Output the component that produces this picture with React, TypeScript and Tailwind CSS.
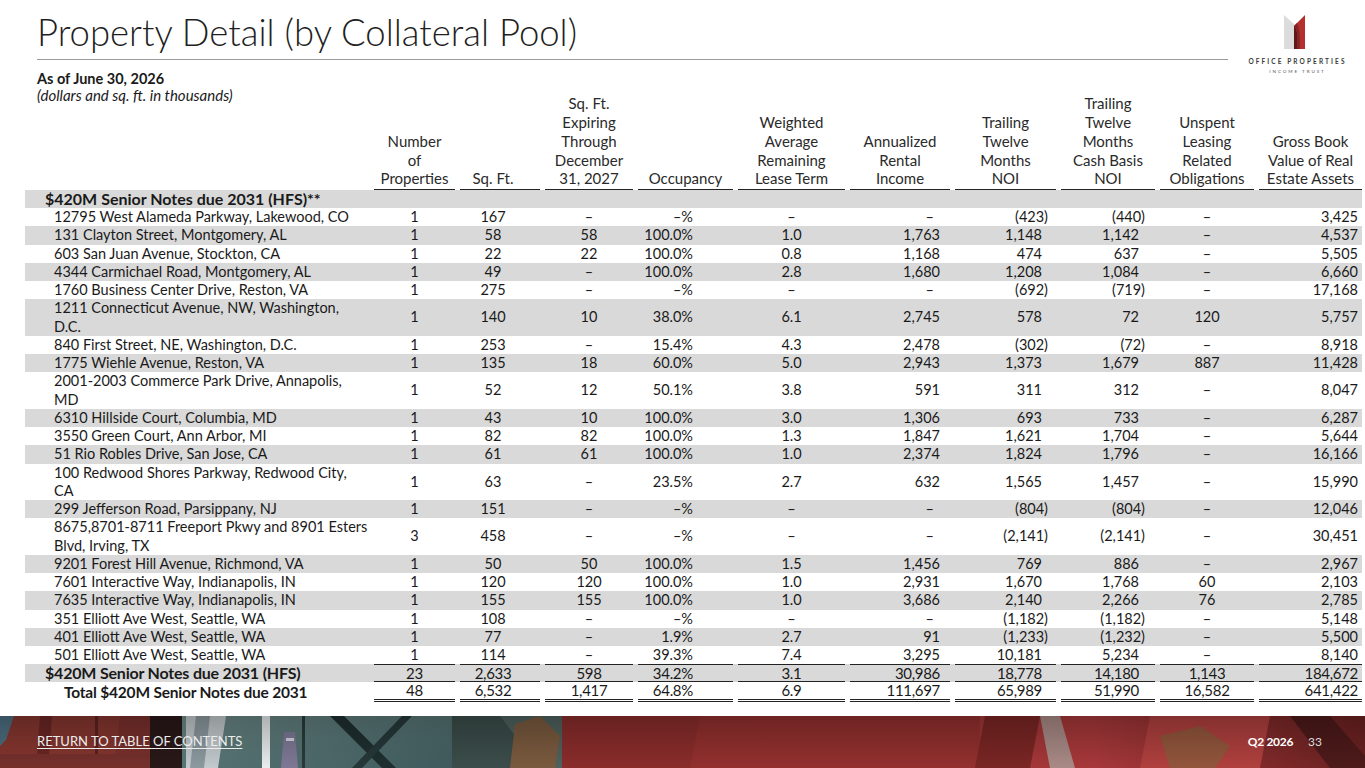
import React from "react";

const GRID =
  "grid grid-cols-[344px_81px_80px_88px_95px_107px_100px_101px_94px_94px_103px] gap-x-[5px] items-center";

const CELL = [
  "text-center",
  "text-center pr-[14px]",
  "text-center",
  "text-right pr-[40px]",
  "text-center",
  "text-right pr-[10px]",
  "text-right pr-[14px]",
  "text-right pr-[16px]",
  "text-center",
  "text-right pr-[4px]",
];

const HEAD_CELL = [
  "text-center",
  "text-center pr-[14px]",
  "text-center",
  "text-center",
  "text-center",
  "text-center",
  "text-center",
  "text-center",
  "text-center",
  "text-center",
];

const HEADS = [
  ["Number", "of", "Properties"],
  ["Sq. Ft."],
  ["Sq. Ft.", "Expiring", "Through", "December", "31, 2027"],
  ["Occupancy"],
  ["Weighted", "Average", "Remaining", "Lease Term"],
  ["Annualized", "Rental", "Income"],
  ["Trailing", "Twelve", "Months", "NOI"],
  ["Trailing", "Twelve", "Months", "Cash Basis", "NOI"],
  ["Unspent", "Leasing", "Related", "Obligations"],
  ["Gross Book", "Value of Real", "Estate Assets"],
];

type Row = [string, ...string[]];

const ROWS: Row[] = [
  ["12795 West Alameda Parkway, Lakewood, CO", "1", "167", "–", "–%", "–", "–", "(423)", "(440)", "–", "3,425"],
  ["131 Clayton Street, Montgomery, AL", "1", "58", "58", "100.0%", "1.0", "1,763", "1,148", "1,142", "–", "4,537"],
  ["603 San Juan Avenue, Stockton, CA", "1", "22", "22", "100.0%", "0.8", "1,168", "474", "637", "–", "5,505"],
  ["4344 Carmichael Road, Montgomery, AL", "1", "49", "–", "100.0%", "2.8", "1,680", "1,208", "1,084", "–", "6,660"],
  ["1760 Business Center Drive, Reston, VA", "1", "275", "–", "–%", "–", "–", "(692)", "(719)", "–", "17,168"],
  ["1211 Connecticut Avenue, NW, Washington,|D.C.", "1", "140", "10", "38.0%", "6.1", "2,745", "578", "72", "120", "5,757"],
  ["840 First Street, NE, Washington, D.C.", "1", "253", "–", "15.4%", "4.3", "2,478", "(302)", "(72)", "–", "8,918"],
  ["1775 Wiehle Avenue, Reston, VA", "1", "135", "18", "60.0%", "5.0", "2,943", "1,373", "1,679", "887", "11,428"],
  ["2001-2003 Commerce Park Drive, Annapolis,|MD", "1", "52", "12", "50.1%", "3.8", "591", "311", "312", "–", "8,047"],
  ["6310 Hillside Court, Columbia, MD", "1", "43", "10", "100.0%", "3.0", "1,306", "693", "733", "–", "6,287"],
  ["3550 Green Court, Ann Arbor, MI", "1", "82", "82", "100.0%", "1.3", "1,847", "1,621", "1,704", "–", "5,644"],
  ["51 Rio Robles Drive, San Jose, CA", "1", "61", "61", "100.0%", "1.0", "2,374", "1,824", "1,796", "–", "16,166"],
  ["100 Redwood Shores Parkway, Redwood City,|CA", "1", "63", "–", "23.5%", "2.7", "632", "1,565", "1,457", "–", "15,990"],
  ["299 Jefferson Road, Parsippany, NJ", "1", "151", "–", "–%", "–", "–", "(804)", "(804)", "–", "12,046"],
  ["8675,8701-8711 Freeport Pkwy and 8901 Esters|Blvd, Irving, TX", "3", "458", "–", "–%", "–", "–", "(2,141)", "(2,141)", "–", "30,451"],
  ["9201 Forest Hill Avenue, Richmond, VA", "1", "50", "50", "100.0%", "1.5", "1,456", "769", "886", "–", "2,967"],
  ["7601 Interactive Way, Indianapolis, IN", "1", "120", "120", "100.0%", "1.0", "2,931", "1,670", "1,768", "60", "2,103"],
  ["7635 Interactive Way, Indianapolis, IN", "1", "155", "155", "100.0%", "1.0", "3,686", "2,140", "2,266", "76", "2,785"],
  ["351 Elliott Ave West, Seattle, WA", "1", "108", "–", "–%", "–", "–", "(1,182)", "(1,182)", "–", "5,148"],
  ["401 Elliott Ave West, Seattle, WA", "1", "77", "–", "1.9%", "2.7", "91", "(1,233)", "(1,232)", "–", "5,500"],
  ["501 Elliott Ave West, Seattle, WA", "1", "114", "–", "39.3%", "7.4", "3,295", "10,181", "5,234", "–", "8,140"],
];

const SUBTOTAL = ["23", "2,633", "598", "34.2%", "3.1", "30,986", "18,778", "14,180", "1,143", "184,672"];
const TOTAL = ["48", "6,532", "1,417", "64.8%", "6.9", "111,697", "65,989", "51,990", "16,582", "641,422"];

function Value({ v, col }: { v: string; col: number }) {
  if (v.startsWith("(")) return <span className="inline-block -mr-[6px]">{v}</span>;
  if (col === 5 && v === "–") return <span className="inline-block pr-[6px]">{v}</span>;
  return <>{v}</>;
}

function Logo() {
  return (
    <div className="flex w-[137px] flex-col items-center pt-[14px]">
      <svg width="22" height="36" viewBox="0 0 22 36" className="ml-[-4px]">
        <polygon points="0,1 11,11 11,35 0,35" fill="#dcdcdc" />
        <polygon points="21,1 21,35 10,35 10,12" fill="#b3302f" />
        <path d="M10,12 C14,16 14,24 13,35 L10,35 Z" fill="#5e181a" />
        <path d="M13,9 C16,15 16,24 16,35 L13,35 C14,24 14,16 10,12 Z" fill="#862325" />
      </svg>
      <div className="mt-[7px] whitespace-nowrap pl-[2px] text-[6.5px] font-bold leading-[9px] tracking-[2.1px] text-[#3a3a3a]">
        OFFICE PROPERTIES
      </div>
      <div className="mt-[2px] whitespace-nowrap pl-[2px] text-[4.6px] leading-[7px] tracking-[1.9px] text-[#555]">
        INCOME TRUST
      </div>
    </div>
  );
}

function FooterPhoto() {
  return (
    <svg className="absolute inset-0 h-full w-full" viewBox="0 0 1365 52" preserveAspectRatio="none">
      <defs>
        <linearGradient id="red" x1="0" x2="1" y1="0" y2="0">
          <stop offset="0" stopColor="#7e2c2a" />
          <stop offset="0.45" stopColor="#8e2e2c" />
          <stop offset="0.8" stopColor="#a8383a" />
          <stop offset="1" stopColor="#6a2120" />
        </linearGradient>
        <linearGradient id="glass" x1="0" x2="1" y1="0" y2="1">
          <stop offset="0" stopColor="#6f8d8c" />
          <stop offset="1" stopColor="#3e5a5c" />
        </linearGradient>
        <linearGradient id="shade" x1="0" x2="0" y1="0" y2="1">
          <stop offset="0" stopColor="#000" stopOpacity="0.25" />
          <stop offset="1" stopColor="#000" stopOpacity="0" />
        </linearGradient>
      </defs>
      <rect width="1365" height="52" fill="url(#red)" />
      <rect x="0" width="185" height="52" fill="#86362f" />
      <polygon points="0,0 14,0 6,24 0,30" fill="#4d6e80" />
      <polygon points="40,0 52,0 48,52 36,52" fill="#6a2624" />
      <rect x="95" y="0" width="3" height="52" fill="#5c2220" />
      <polygon points="120,0 150,0 150,52 114,52" fill="#7a302c" />
      <rect x="150" y="0" width="32" height="52" fill="#2a1818" />
      <rect x="0" y="38" width="150" height="14" fill="#76302c" />
      <rect x="182" y="0" width="270" height="52" fill="url(#glass)" />
      <polygon points="186,0 226,0 218,52 186,52" fill="#c3cacd" />
      <polygon points="196,0 210,0 204,52 190,52" fill="#8c9aa0" />
      <rect x="262" y="0" width="8" height="52" fill="#e8ecec" />
      <polygon points="330,0 344,0 396,52 382,52" fill="#1f2f30" />
      <polygon points="402,0 412,0 362,52 352,52" fill="#263839" />
      <rect x="302" y="0" width="3" height="52" fill="#2a3a3a" />
      <polygon points="284,16 295,16 298,52 281,52" fill="#7e7896" />
      <rect x="286" y="22" width="8" height="3" fill="#d7d2e2" />
      <rect x="452" y="0" width="110" height="52" fill="#4f625e" />
      <polygon points="452,0 500,0 540,52 452,52" fill="#3b4d4a" />
      <polygon points="515,8 540,0 560,20 555,52 510,52" fill="#7a5a3e" />
      <polygon points="562,0 700,0 690,52 562,52" fill="#8a2d2b" />
      <polygon points="700,0 980,0 980,52 690,52" fill="#93302e" />
      <polygon points="985,0 1040,0 1030,52 975,52" fill="#7a2624" />
      <polygon points="1040,0 1060,0 1075,52 1050,52" fill="#a98a86" />
      <polygon points="1150,0 1270,0 1260,52 1140,52" fill="#b0403e" />
      <polygon points="1160,20 1200,10 1230,30 1215,52 1170,52" fill="#93563c" />
      <polygon points="1290,0 1330,0 1365,40 1365,52 1330,52" fill="#4e1a1a" />
      <rect width="1365" height="52" fill="url(#shade)" />
    </svg>
  );
}

export default function App() {
  return (
    <div className="flex h-[768px] w-[1365px] flex-col overflow-hidden bg-white font-[Lato,sans-serif] text-[#1a1a1a]">
      <div className="flex-1">
        <div className="flex h-[61px] items-start">
          <div className="flex-1 pl-[37px]">
            <h1 className="whitespace-nowrap pt-[11px] text-[36.5px] font-light leading-[42px] text-[#1f1f1f]">
              Property Detail (by Collateral Pool)
            </h1>
            <div className="mt-[6px] h-px bg-[#9a9a9a]" />
          </div>
          <Logo />
        </div>

        <div className="ml-[25px] w-[1337px]">
          <div className={GRID + " min-h-[129px] items-end"}>
            <div className="self-start pl-[12px] pt-[9px]">
              <div className="text-[14.5px] font-bold leading-[17px]">As of June 30, 2026</div>
              <div className="text-[15px] italic leading-[17px]">(dollars and sq. ft. in thousands)</div>
            </div>
            {HEADS.map((h, i) => (
              <div
                key={i}
                className={
                  HEAD_CELL[i] +
                  " border-b-[1.5px] border-[#222] pb-[1px] text-[15px] leading-[18.75px] text-[#2a2a2a]"
                }
              >
                {h.map((l) => (
                  <div key={l} className="whitespace-nowrap">
                    {l}
                  </div>
                ))}
              </div>
            ))}
          </div>

          <div className="bg-[#d9d9d9] pl-[20px] text-[16px] font-bold leading-[18px]">
            $420M Senior Notes due 2031 (HFS)**
          </div>

          {ROWS.map((r, idx) => {
            const [label, ...vals] = r;
            const lines = label.split("|");
            return (
              <div
                key={label}
                className={GRID + " text-[14.5px] " + (idx % 2 === 1 ? "bg-[#d9d9d9]" : "bg-white")}
              >
                <div className="whitespace-nowrap pl-[29px]">
                  {lines.map((l) => (
                    <div key={l} className="leading-[18.25px]">
                      {l}
                    </div>
                  ))}
                </div>
                {vals.map((v, i) => (
                  <div key={i} className={CELL[i] + " leading-[18.25px]"}>
                    <Value v={v} col={i} />
                  </div>
                ))}
              </div>
            );
          })}

          <div className={GRID + " bg-[#d9d9d9]"}>
            <div className="pl-[20px] text-[16px] font-bold leading-[16px] tracking-[-0.2px]">
              $420M Senior Notes due 2031 (HFS)
            </div>
            {SUBTOTAL.map((v, i) => (
              <div
                key={i}
                className={CELL[i] + " border-y border-[#222] text-[15px] leading-[16px] tracking-[-0.3px]"}
              >
                {v}
              </div>
            ))}
          </div>
          <div className={GRID + " bg-white"}>
            <div className="pl-[39px] text-[15.5px] font-bold leading-[17px] tracking-[-0.2px]">
              Total $420M Senior Notes due 2031
            </div>
            {TOTAL.map((v, i) => (
              <div
                key={i}
                className={
                  CELL[i] + " border-b-[3px] border-double border-[#222] text-[15px] leading-[17px] tracking-[-0.3px]"
                }
              >
                {v}
              </div>
            ))}
          </div>
        </div>
      </div>

      <div className="relative flex h-[52px] items-center justify-between pl-[37px] pr-[43px]">
        <FooterPhoto />
        <a className="relative text-[13px] text-[#ececec] underline underline-offset-2">RETURN TO TABLE OF CONTENTS</a>
        <div className="relative flex items-center gap-[15px] text-[12px]">
          <span className="font-bold tracking-[-0.3px] text-white">Q2 2026</span>
          <span className="text-[#dcdcdc]">33</span>
        </div>
      </div>
    </div>
  );
}
